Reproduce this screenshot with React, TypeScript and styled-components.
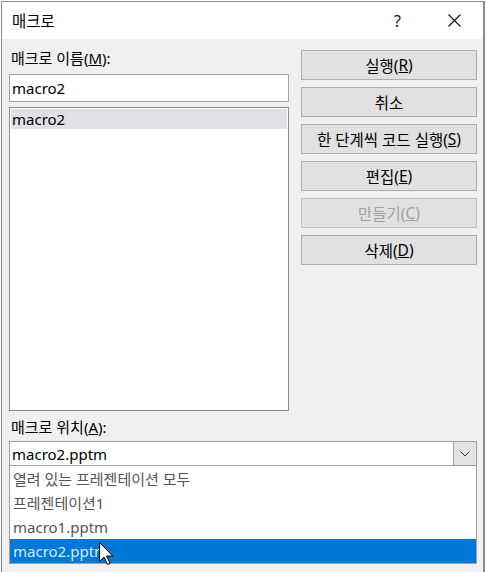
import React from 'react';
import styled, { createGlobalStyle } from 'styled-components';

const Global = createGlobalStyle`
  html, body { margin: 0; padding: 0; background: #fff; overflow: hidden; }
  body { font-family: "Noto Sans", "Noto Sans CJK KR", sans-serif; font-size: 15px; color: #000; }
  * { box-sizing: border-box; }
`;

const Window = styled.div`
  margin: 1px 0 0 1px;
  width: 484px;
  height: 571px;
  border: 1px solid #8a8a8a;
  border-right-width: 2px;
  border-bottom: none;
  display: flex;
  flex-direction: column;
  background: #f0f0f0;
`;

const TitleBar = styled.div`
  height: 37px;
  flex: none;
  background: #fff;
  display: flex;
  align-items: center;
  padding-left: 10px;
`;

const Title = styled.div`
  flex: 1;
  font-size: 15.5px;
  line-height: 20px;
`;

const CaptionButton = styled.div`
  width: 57px;
  height: 100%;
  display: flex;
  align-items: center;
  justify-content: center;
  font-size: 16px;
  color: #111;
`;

const Body = styled.div`
  padding: 11px 7px 0 7px;
  display: flex;
  flex-direction: column;
`;

const TopGrid = styled.div`
  display: grid;
  grid-template-columns: 280px 176px;
  column-gap: 12px;
`;

const Column = styled.div`
  display: flex;
  flex-direction: column;
`;

const Label = styled.div<{ $gapAbove?: number; $gapBelow: number }>`
  height: 16px;
  line-height: 16px;
  font-size: 15px;
  margin-top: ${p => p.$gapAbove ?? 0}px;
  margin-bottom: ${p => p.$gapBelow}px;
  padding-left: 2px;
  white-space: nowrap;
`;

const TextInput = styled.div`
  height: 28px;
  background: #fff;
  border: 1px solid #a5a5a5;
  display: flex;
  align-items: center;
  padding-left: 2px;
`;

const ListBox = styled.div`
  margin-top: 5px;
  height: 304px;
  background: #fff;
  border: 1px solid #8b8b8b;
  padding: 1px;
`;

const ListItem = styled.div<{ $selected?: boolean }>`
  height: 20px;
  line-height: 20px;
  padding-left: 1px;
  background: ${p => (p.$selected ? '#e0e0e5' : 'transparent')};
`;

const ButtonStack = styled.div`
  display: flex;
  flex-direction: column;
  gap: 7px;
`;

const Button = styled.div<{ $disabled?: boolean }>`
  height: 30px;
  background: #e1e1e1;
  border: 1px solid ${p => (p.$disabled ? '#bfbfbf' : '#adadad')};
  color: ${p => (p.$disabled ? '#a0a0a0' : '#000')};
  display: flex;
  align-items: center;
  justify-content: center;
  white-space: nowrap;
  font-size: 15.5px;
`;

const ComboWrap = styled.div`
  position: relative;
  width: 468px;
`;

const Combo = styled.div`
  height: 25px;
  background: #fff;
  border: 1px solid #a0a0a0;
  display: flex;
  align-items: center;
`;

const ComboValue = styled.div`
  flex: 1;
  padding-left: 2px;
`;

const DropButton = styled.div`
  width: 23px;
  height: 100%;
  background: #e3e3e3;
  border-left: 1px solid #a0a0a0;
  display: flex;
  align-items: center;
  justify-content: center;
`;

const DropList = styled.div`
  position: absolute;
  top: 100%;
  left: 0;
  right: 0;
  height: 98px;
  background: #fff;
  border: 1px solid #a0a0a0;
  border-top: none;
  padding-top: 1px;
`;

const DropItem = styled.div<{ $selected?: boolean }>`
  position: relative;
  height: 24px;
  line-height: 24px;
  padding-left: 3px;
  color: ${p => (p.$selected ? '#dbeaf7' : '#555')};
  background: ${p => (p.$selected ? '#0078d7' : 'transparent')};
`;

const Cursor = styled.svg`
  position: absolute;
  left: 89px;
  top: 3px;
`;

export default function App() {
  return (
    <>
      <Global />
      <Window>
        <TitleBar>
          <Title>매크로</Title>
          <CaptionButton>?</CaptionButton>
          <CaptionButton>
            <svg width="13" height="13" viewBox="0 0 13 13">
              <path d="M0.5 0.5 L12.5 12.5 M12.5 0.5 L0.5 12.5" stroke="#111" strokeWidth="1.1" fill="none" />
            </svg>
          </CaptionButton>
        </TitleBar>
        <Body>
          <TopGrid>
            <Column>
              <Label $gapBelow={8}>매크로 이름(<u>M</u>):</Label>
              <TextInput>macro2</TextInput>
              <ListBox>
                <ListItem $selected>macro2</ListItem>
              </ListBox>
            </Column>
            <ButtonStack>
              <Button>실행(<u>R</u>)</Button>
              <Button>취소</Button>
              <Button>한 단계씩 코드 실행(<u>S</u>)</Button>
              <Button>편집(<u>E</u>)</Button>
              <Button $disabled>만들기(<u>C</u>)</Button>
              <Button>삭제(<u>D</u>)</Button>
            </ButtonStack>
          </TopGrid>
          <Label $gapAbove={8} $gapBelow={6}>매크로 위치(<u>A</u>):</Label>
          <ComboWrap>
            <Combo>
              <ComboValue>macro2.pptm</ComboValue>
              <DropButton>
                <svg width="10" height="6" viewBox="0 0 10 6">
                  <path d="M0.5 0.5 L5 5 L9.5 0.5" stroke="#333" strokeWidth="1" fill="none" />
                </svg>
              </DropButton>
            </Combo>
            <DropList>
              <DropItem>열려 있는 프레젠테이션 모두</DropItem>
              <DropItem>프레젠테이션1</DropItem>
              <DropItem>macro1.pptm</DropItem>
              <DropItem $selected>
                macro2.pptm
                <Cursor width="15" height="24" viewBox="0 0 15 24">
                  <path d="M0.5 0.5 L0.5 19.5 L5 15 L8.5 22.5 L11 21.3 L7.6 14 L13.8 14 Z" fill="#fff" stroke="#000" strokeWidth="1" strokeLinejoin="miter" />
                </Cursor>
              </DropItem>
            </DropList>
          </ComboWrap>
        </Body>
      </Window>
    </>
  );
}
